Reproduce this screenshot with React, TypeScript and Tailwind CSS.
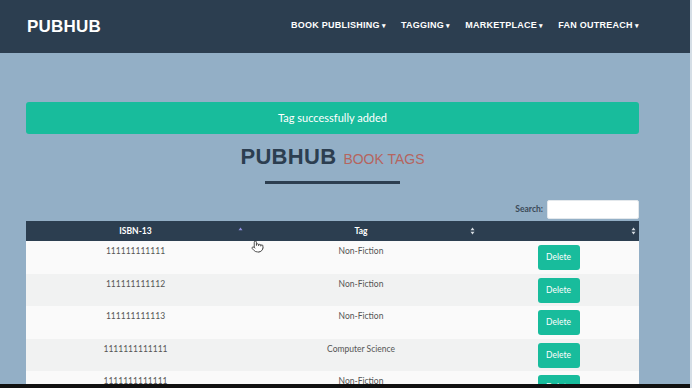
import React from "react";
import { Pointer } from "lucide-react";

const NAV_ITEMS = ["BOOK PUBLISHING", "TAGGING", "MARKETPLACE", "FAN OUTREACH"];

const ROWS: Array<{ isbn: string; tag: string }> = [
  { isbn: "111111111111", tag: "Non-Fiction" },
  { isbn: "111111111112", tag: "Non-Fiction" },
  { isbn: "111111111113", tag: "Non-Fiction" },
  { isbn: "1111111111111", tag: "Computer Science" },
  { isbn: "1111111111111", tag: "Non-Fiction" },
];

function SortBoth() {
  return (
    <svg width="5" height="8" viewBox="0 0 5 8" className="shrink-0">
      <path d="M2.5 0.5 L4.5 3.2 L0.5 3.2 Z" fill="#d7dde3" />
      <path d="M2.5 7.5 L4.5 4.8 L0.5 4.8 Z" fill="#d7dde3" />
    </svg>
  );
}

function SortAsc() {
  return (
    <svg width="5" height="8" viewBox="0 0 5 8" className="shrink-0">
      <path d="M2.5 1.5 L4.5 4.2 L0.5 4.2 Z" fill="#8e8fe0" />
    </svg>
  );
}

export default function App() {
  return (
    <div
      className="relative h-[388px] w-[692px] overflow-hidden bg-[#93afc6] border-r-2 border-[#d5dee6]"
      style={{ fontFamily: "Lato, 'Liberation Sans', sans-serif" }}
    >
      {/* navbar */}
      <div className="h-[53px] bg-[#2c3e50]">
        <div className="ml-[27px] w-[612px] h-full flex items-center justify-between">
          <div
            className="text-[17px] font-bold text-white tracking-[0.2px] mt-[1px]"
            style={{ fontFamily: "'Liberation Sans', Arial, sans-serif" }}
          >
            PUBHUB
          </div>
          <div
            className="flex items-center gap-[15px] text-[9px] font-bold text-white tracking-[0.25px] -mt-[1px]"
            style={{ fontFamily: "'Liberation Sans', Arial, sans-serif" }}
          >
            {NAV_ITEMS.map((item) => (
              <span key={item} className="flex items-center">
                {item}
                <span className="ml-[2px] text-[7px]">▾</span>
              </span>
            ))}
          </div>
        </div>
      </div>

      <div className="ml-[26px] w-[613px]">
        {/* alert */}
        <div className="mt-[49px] h-[32px] rounded-[3px] bg-[#18bc9c] flex items-center justify-center text-white text-[11px]">
          Tag successfully added
        </div>

        {/* title */}
        <div
          className="mt-[12px] flex items-baseline justify-center gap-[7px] leading-none"
          style={{ fontFamily: "'Liberation Sans', Arial, sans-serif" }}
        >
          <span className="text-[22px] font-bold text-[#2c3e50] tracking-[0.3px]">PUBHUB</span>
          <span className="text-[14px] text-[#b5655f]">BOOK TAGS</span>
        </div>
        <div className="mx-auto mt-[13px] h-[3px] w-[135px] bg-[#2c3e50]" />

        {/* search */}
        <div className="mt-[16px] flex items-center justify-end gap-[4px]">
          <span className="text-[8.5px] font-bold text-[#3b4a58]">Search:</span>
          <div className="h-[19px] w-[92px] rounded-[2px] bg-white border border-[#e3e8ec]" />
        </div>

        {/* table */}
        <div className="mt-[2px] text-[8.5px]">
          <div className="h-[20px] bg-[#2c3e50] text-white font-bold grid grid-cols-[219px_232px_162px] items-center">
            <div className="relative flex items-center justify-center h-full">
              ISBN-13
              <span className="absolute right-[2px] top-[5px]">
                <SortAsc />
              </span>
            </div>
            <div className="relative flex items-center justify-center h-full">
              Tag
              <span className="absolute right-[2px] top-[6px]">
                <SortBoth />
              </span>
            </div>
            <div className="relative h-full">
              <span className="absolute right-[3px] top-[6px]">
                <SortBoth />
              </span>
            </div>
          </div>
          {ROWS.map((row, i) => (
            <div
              key={i}
              className={`h-[32.5px] grid grid-cols-[219px_232px_162px] text-[#555555] ${
                i % 2 === 0 ? "bg-[#fafafa]" : "bg-[#f1f2f2]"
              }`}
            >
              <div className="text-center pt-[4px]">{row.isbn}</div>
              <div className="text-center pt-[4px]">{row.tag}</div>
              <div className="flex justify-center pt-[4px] pl-[1px]">
                <div className="h-[25px] w-[42px] rounded-[3px] bg-[#18bc9c] text-white flex items-center justify-center text-[8.5px]">
                  Delete
                </div>
              </div>
            </div>
          ))}
        </div>
      </div>

      {/* mouse cursor */}
      <Pointer
        className="absolute left-[251px] top-[240px]"
        size={13}
        strokeWidth={1.6}
        fill="white"
        color="#333333"
      />

      {/* bottom edge */}
      <div className="absolute left-0 right-0 bottom-0 h-[4px] bg-[#111111]" />
    </div>
  );
}
